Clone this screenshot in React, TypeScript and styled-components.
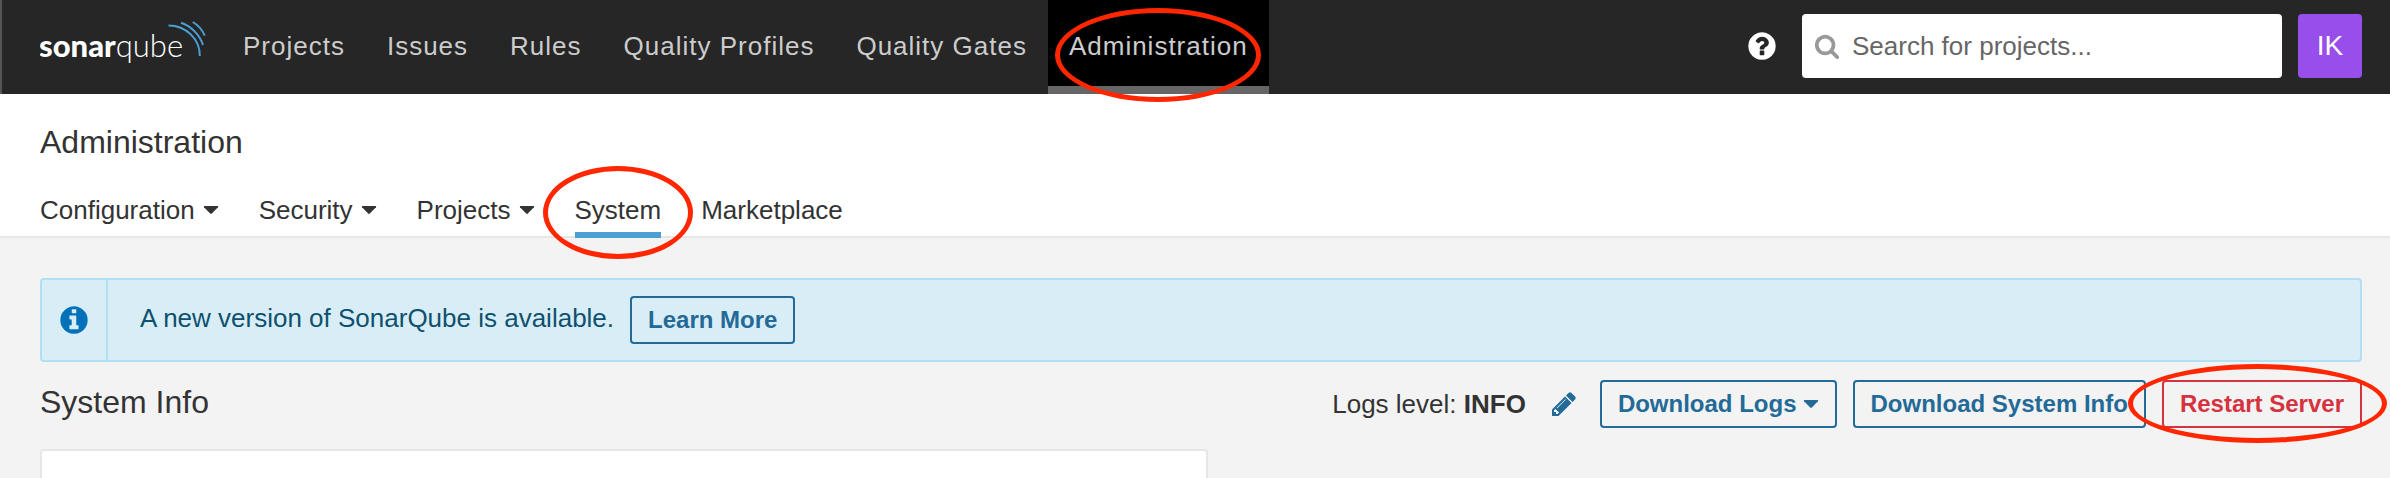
import React from "react";
import styled, { createGlobalStyle, css } from "styled-components";

const GlobalStyle = createGlobalStyle`
  *, *::before, *::after { box-sizing: border-box; }
  body {
    margin: 0;
    background: #f3f3f3;
    color: #333;
    font-family: "Liberation Sans", Arial, sans-serif;
    font-size: 26px;
    line-height: 32px;
  }
  button, input { font: inherit; }
`;

const Page = styled.div`
  display: flex;
  flex-direction: column;
  min-height: 100vh;
`;

const TopBar = styled.header`
  display: flex;
  align-items: stretch;
  height: 94px;
  padding: 0 28px 0 38px;
  border-left: 2px solid #555;
  background: #262626;
`;

const LogoLink = styled.a`
  display: flex;
  width: 182px;
  color: #fff;
  text-decoration: none;
`;

const NavList = styled.nav`
  display: flex;
  flex: 1;
`;

const NavLink = styled.a<{ $active?: boolean }>`
  position: relative;
  padding: 30px 21px 0;
  border-bottom: 8px solid transparent;
  color: #ccc;
  letter-spacing: 1px;
  white-space: nowrap;
  text-decoration: none;
  ${(p) => p.$active && css`
    border-color: #666;
    background: #000;
  `}
`;

const TopTools = styled.div`
  display: flex;
  align-items: center;
  gap: 16px;
  padding-bottom: 2px;
`;

const IconButton = styled.button<{ $color: string }>`
  display: flex;
  padding: 0;
  border: 0;
  background: none;
  color: ${(p) => p.$color};
`;

const SearchBox = styled.label`
  display: flex;
  align-items: center;
  gap: 12px;
  width: 480px;
  height: 64px;
  margin-left: 8px;
  padding: 0 12px;
  border-radius: 4px;
  background: #fff;
  color: #999;
`;

const SearchInput = styled.input`
  flex: 1;
  min-width: 0;
  padding: 0;
  border: 0;
  outline: 0;
  background: none;
  color: #333;
  &::placeholder { color: #666; opacity: 1; }
`;

const Avatar = styled.button`
  width: 64px;
  height: 64px;
  padding: 0;
  border: 0;
  border-radius: 4px;
  background: #984eeb;
  color: #fff;
  font-size: 28px;
`;

const ContextBar = styled.section`
  padding: 32px 28px 0 40px;
  border-bottom: 2px solid #e6e6e6;
  background: #fff;
`;

const Title = styled.h1`
  margin: 0;
  font-size: 32px;
  font-weight: 400;
  line-height: 32px;
`;

const Tabs = styled.nav`
  display: flex;
  gap: 40px;
  margin: 36px 0 -2px;
`;

const Tab = styled.a<{ $active?: boolean }>`
  position: relative;
  display: flex;
  align-items: center;
  gap: 8px;
  height: 44px;
  padding-bottom: 6px;
  border-bottom: 6px solid ${(p) => (p.$active ? "#4b9fd5" : "transparent")};
  color: #333;
  text-decoration: none;
`;

const Content = styled.main`
  display: flex;
  flex: 1;
  flex-direction: column;
  padding: 40px 28px 0 40px;
`;

const Alert = styled.div`
  display: flex;
  height: 84px;
  border: 2px solid #b1dff3;
  border-radius: 4px;
  background: #d9edf7;
  color: #0e516f;
`;

const AlertIcon = styled.div`
  display: flex;
  align-items: center;
  justify-content: center;
  width: 66px;
  border-right: 2px solid #b1dff3;
  color: #0271b9;
`;

const AlertBody = styled.div`
  display: flex;
  align-items: center;
  gap: 16px;
  padding: 0 32px;
`;

const AlertText = styled.span`
  padding-bottom: 4px;
`;

const Button = styled.button<{ $danger?: boolean }>`
  display: flex;
  align-items: center;
  gap: 6px;
  height: 48px;
  padding: 0 16px;
  border: 2px solid currentColor;
  border-radius: 4px;
  background: transparent;
  color: ${(p) => (p.$danger ? "#d4333f" : "#236a97")};
  font-size: 24px;
  font-weight: 700;
  white-space: nowrap;
`;

const PageHeader = styled.div`
  display: flex;
  justify-content: space-between;
  margin: 18px 0 21px;
`;

const PageTitle = styled(Title)`
  margin-top: 6px;
`;

const Actions = styled.div`
  display: flex;
  align-items: center;
  gap: 16px;
`;

const LogsLevel = styled.div`
  display: flex;
  align-items: center;
  gap: 24px;
  margin-right: 6px;
`;

const Card = styled.section`
  flex: 1;
  width: calc(50% + 7px);
  border: 2px solid #e6e6e6;
  border-bottom: 0;
  border-radius: 4px 4px 0 0;
  background: #fff;
`;

const Anchor = styled.div`
  position: relative;
`;

const rings = {
  nav: "top: 8px; left: 7px; width: 206px; height: 94px;",
  tab: "top: -28px; left: -32px; width: 150px; height: 93px;",
  restart: "top: -16px; left: -34px; width: 259px; height: 79px;",
};

const Ring = styled.span<{ $place: keyof typeof rings }>`
  position: absolute;
  z-index: 1;
  ${(p) => rings[p.$place]}
  border: 5px solid #ff2600;
  border-radius: 50%;
  pointer-events: none;
`;

const glyphs = {
  help: "M1024 1376v-192q0-14-9-23t-23-9h-192q-14 0-23 9t-9 23v192q0 14 9 23t23 9h192q14 0 23-9t9-23zm256-672q0-88-55.5-163t-138.5-116-170-41q-243 0-371 213-15 24 8 42l132 100q7 6 19 6 16 0 25-12 53-68 86-92 34-24 86-24 48 0 85.5 26t37.5 59q0 38-20 61t-68 45q-63 28-115.5 86.5t-52.5 125.5v36q0 14 9 23t23 9h192q14 0 23-9t9-23q0-19 21.5-49.5t54.5-49.5q32-18 49-28.5t46-35 44.5-48 28-60.5 12.5-81zm384 192q0 209-103 385.5t-279.5 279.5-385.5 103-385.5-103-279.5-279.5-103-385.5 103-385.5 279.5-279.5 385.5-103 385.5 103 279.5 279.5 103 385.5z",
  info: "M1152 1376v-160q0-14-9-23t-23-9h-96v-512q0-14-9-23t-23-9h-320q-14 0-23 9t-9 23v160q0 14 9 23t23 9h96v320h-96q-14 0-23 9t-9 23v160q0 14 9 23t23 9h448q14 0 23-9t9-23zm-128-896v-160q0-14-9-23t-23-9h-192q-14 0-23 9t-9 23v160q0 14 9 23t23 9h192q14 0 23-9t9-23zm640 416q0 209-103 385.5t-279.5 279.5-385.5 103-385.5-103-279.5-279.5-103-385.5 103-385.5 279.5-279.5 385.5-103 385.5 103 279.5 279.5 103 385.5z",
  search: "M1216 832q0-185-131.5-316.5t-316.5-131.5-316.5 131.5-131.5 316.5 131.5 316.5 316.5 131.5 316.5-131.5 131.5-316.5zm512 832q0 52-38 90t-90 38q-54 0-90-38l-343-342q-179 124-399 124-143 0-273.5-55.5t-225-150-150-225-55.5-273.5 55.5-273.5 150-225 225-150 273.5-55.5 273.5 55.5 225 150 150 225 55.5 273.5q0 220-124 399l343 343q37 37 37 90z",
  pencil: "M491 1536l91-91-235-235-91 91v107h128v128h107zm523-928q0-22-22-22-10 0-17 7l-542 542q-7 7-7 17 0 22 22 22 10 0 17-7l542-542q7-7 7-17zm-54-192l416 416-832 832h-416v-416zm683 96q0 53-37 90l-166 166-416-416 166-165q36-38 90-38 53 0 91 38l235 234q37 39 37 91z",
};

function Icon({ name, size }: { name: keyof typeof glyphs; size: number }) {
  return (
    <svg width={size} height={size} viewBox="0 0 1792 1792" fill="currentColor" aria-hidden="true">
      <path d={glyphs[name]} />
    </svg>
  );
}

function Caret() {
  return (
    <svg width="16" height="8" viewBox="0 0 16 8" fill="currentColor" aria-hidden="true">
      <path d="M1.6 0h12.8q1.2 0 .6 1.2L8.8 7.600q-.8.7-1.6 0L1 1.2Q.4 0 1.6 0z" />
    </svg>
  );
}

function Logo() {
  return (
    <svg width="168" height="94" viewBox="40 0 168 94" role="img" aria-label="sonarqube">
      <text x="39" y="57" fill="#fff" fontFamily="Lato, sans-serif" fontSize="31">
        <tspan fontWeight="900">sonar</tspan>
        <tspan fontWeight="300">qube</tspan>
      </text>
      <g fill="none" stroke="#4b9fd5" strokeWidth="2">
        <path d="M168.500 25.500C186 25.500 200 39 199.800 56" />
        <path d="M181 22.700C191 26 200 35 203 45" />
        <path d="M192.700 22C198 25 202.500 30 204.700 35.700" />
      </g>
    </svg>
  );
}

const navItems = ["Projects", "Issues", "Rules", "Quality Profiles", "Quality Gates", "Administration"];

const tabItems = [
  { label: "Configuration", menu: true },
  { label: "Security", menu: true },
  { label: "Projects", menu: true },
  { label: "System", active: true },
  { label: "Marketplace" },
];

export default function App() {
  return (
    <>
      <GlobalStyle />
      <Page>
        <TopBar>
          <LogoLink href="#"><Logo /></LogoLink>
          <NavList>
            {navItems.map((label) => {
              const active = label === "Administration";
              return (
                <NavLink key={label} href="#" $active={active}>
                  {label}
                  {active && <Ring $place="nav" />}
                </NavLink>
              );
            })}
          </NavList>
          <TopTools>
            <IconButton $color="#fff" aria-label="Help"><Icon name="help" size={32} /></IconButton>
            <SearchBox>
              <Icon name="search" size={26} />
              <SearchInput type="text" placeholder="Search for projects..." aria-label="Search for projects" />
            </SearchBox>
            <Avatar>IK</Avatar>
          </TopTools>
        </TopBar>
        <ContextBar>
          <Title>Administration</Title>
          <Tabs>
            {tabItems.map((tab) => (
              <Tab key={tab.label} href="#" $active={tab.active}>
                {tab.label}
                {tab.menu && <Caret />}
                {tab.active && <Ring $place="tab" />}
              </Tab>
            ))}
          </Tabs>
        </ContextBar>
        <Content>
          <Alert>
            <AlertIcon><Icon name="info" size={32} /></AlertIcon>
            <AlertBody>
              <AlertText>A new version of SonarQube is available.</AlertText>
              <Button>Learn More</Button>
            </AlertBody>
          </Alert>
          <PageHeader>
            <PageTitle as="h2">System Info</PageTitle>
            <Actions>
              <LogsLevel>
                <span>Logs level: <strong>INFO</strong></span>
                <IconButton $color="#236a97" aria-label="Edit logs level"><Icon name="pencil" size={28} /></IconButton>
              </LogsLevel>
              <Button>Download Logs <Caret /></Button>
              <Button>Download System Info</Button>
              <Anchor>
                <Button $danger>Restart Server</Button>
                <Ring $place="restart" />
              </Anchor>
            </Actions>
          </PageHeader>
          <Card />
        </Content>
      </Page>
    </>
  );
}
